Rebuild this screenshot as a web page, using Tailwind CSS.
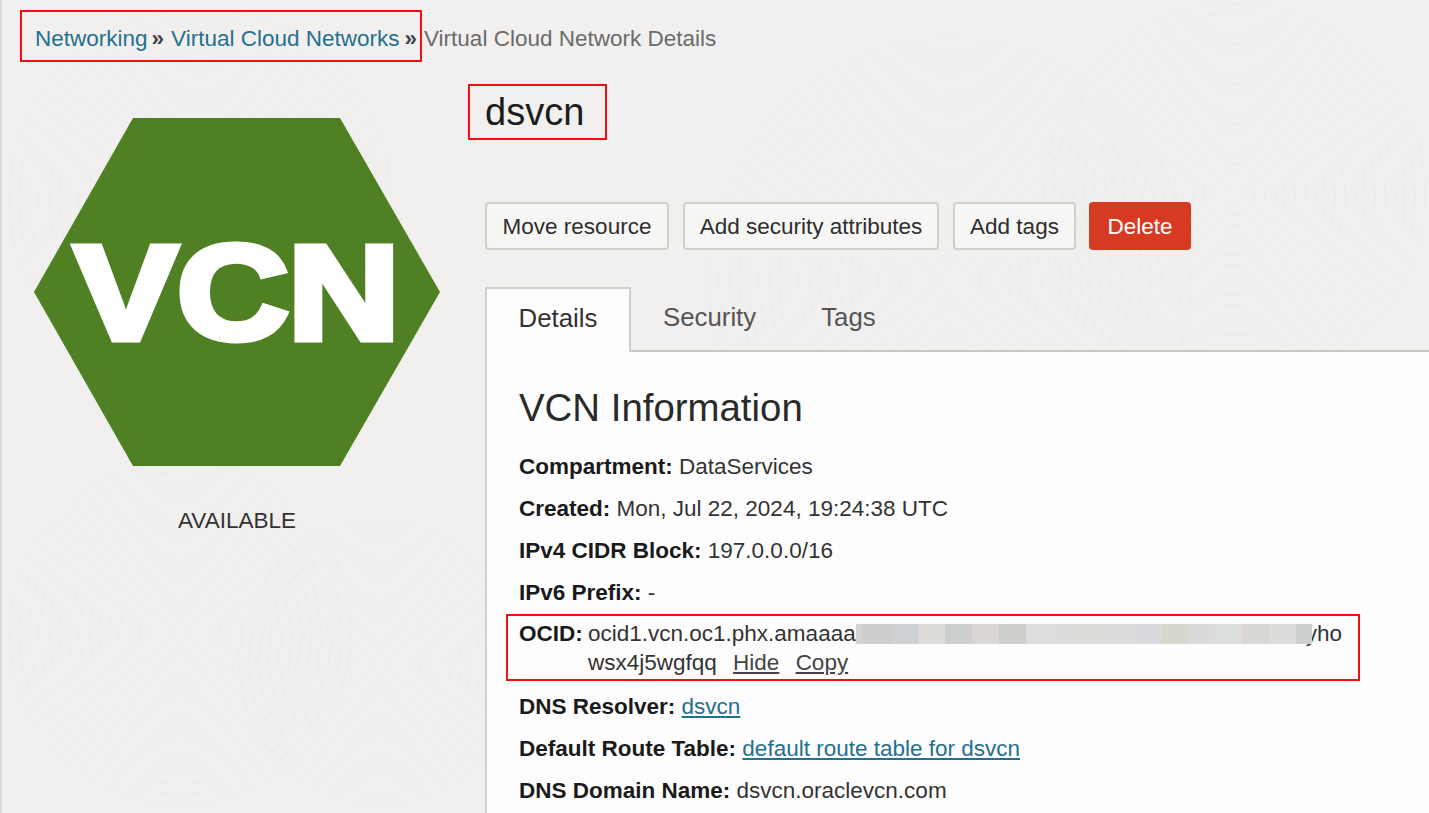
<!DOCTYPE html>
<html lang="en">
<head>
    <meta charset="UTF-8">
    <title>Virtual Cloud Network Details</title>
    <script src="https://cdn.jsdelivr.net/npm/@tailwindcss/browser@4"></script>
</head>
<body class="relative w-[1429px] h-[813px] overflow-hidden bg-[#f1f0ef] font-['Liberation_Sans',Arial,sans-serif] text-[#1f1f1f]">
    <!-- faint swirl texture -->
    <div class="absolute left-[700px] top-[30px] w-[500px] h-[500px] rounded-full bg-[repeating-radial-gradient(circle,#eeedeb_0,#eeedeb_1px,transparent_2px,transparent_10px)]"></div>
    <div class="absolute left-[1040px] top-0 w-[389px] h-[389px] rounded-full bg-[repeating-radial-gradient(circle,#eeedeb_0,#eeedeb_1px,transparent_2px,transparent_10px)]"></div>
    <div class="absolute left-0 top-0 w-[400px] h-[400px] rounded-full bg-[repeating-radial-gradient(circle,#eeedeb_0,#eeedeb_1px,transparent_2px,transparent_10px)]"></div>
    <div class="absolute left-0 top-[453px] w-[360px] h-[360px] rounded-full bg-[repeating-radial-gradient(circle,#eeedeb_0,#eeedeb_1px,transparent_2px,transparent_10px)]"></div>
    <div class="absolute left-[230px] top-[513px] w-[300px] h-[300px] rounded-full bg-[repeating-radial-gradient(circle,#eeedeb_0,#eeedeb_1px,transparent_2px,transparent_10px)]"></div>
    <div class="absolute left-0 top-0 w-[2px] h-full bg-[#dcdbd9]"></div>

    <div class="relative">
        <nav class="h-[76px] pl-[35px] pt-[25px] text-[22.5px] leading-[28px] flex whitespace-pre">
            <a class="text-[#23708f]">Networking</a><span class="font-bold text-[#444] ml-[4px] mr-[7px]">»</span><a class="text-[#23708f]">Virtual Cloud Networks</a><span class="font-bold text-[#444] ml-[5px] mr-[7px]">»</span><span class="text-[#6b6b6b]">Virtual Cloud Network Details</span>
        </nav>

        <div class="flex">
            <aside class="w-[485px] shrink-0 pt-[42px] pl-[34px]">
                <svg width="406" height="348" viewBox="0 0 406 348" class="block">
                    <polygon points="99,0 306,0 406,174 306,348 99,348 0,174" fill="#4f8023"/>
                    <text x="203" y="220.5" text-anchor="middle" textLength="325" lengthAdjust="spacingAndGlyphs" fill="#fff" stroke="#fff" stroke-width="7" font-size="133" font-weight="700" font-family="Liberation Sans, Arial, sans-serif">VCN</text>
                </svg>
                <p class="w-[406px] mt-[41px] text-center text-[22.5px] leading-[28px] text-[#333]">AVAILABLE</p>
            </aside>

            <main class="flex-1 min-w-0">
                <h1 class="pt-[13px] text-[38px] leading-[46px] text-[#1c1c1c]">dsvcn</h1>

                <div class="mt-[67px] flex gap-[14px] text-[22.5px] leading-none text-[#2e2e2e]">
                    <button class="h-[48px] w-[184px] pt-[2px] rounded-[4px] border-2 border-[#d0cfcc] bg-[#f6f6f5]">Move resource</button>
                    <button class="h-[48px] w-[256px] pt-[2px] rounded-[4px] border-2 border-[#d0cfcc] bg-[#f6f6f5]">Add security attributes</button>
                    <button class="h-[48px] w-[123px] pt-[2px] rounded-[4px] border-2 border-[#d0cfcc] bg-[#f6f6f5]">Add tags</button>
                    <button class="h-[48px] w-[102px] -ml-[1px] pt-[2px] rounded-[4px] bg-[#d73a22] text-white">Delete</button>
                </div>

                <div class="mt-[37px] flex h-[65px] items-stretch border-b-2 border-[#c9c8c5] text-[25.8px]">
                    <div class="relative -mb-[2px] w-[146px] h-[65px] border-2 border-b-0 border-[#d0cfcc] bg-[#fdfdfd] pt-[10px] text-center text-[#333]">Details</div>
                    <div class="pl-[32px] pt-[11px] text-[#555]">Security</div>
                    <div class="pl-[65px] pt-[11px] text-[#555]">Tags</div>
                </div>

                <section class="h-[461px] border-l-2 border-[#d0cfcc] bg-[#fdfdfd] pl-[32px] text-[22.5px] leading-[28px] text-[#333]">
                    <h2 class="pt-[34px] text-[38.4px] leading-[44px] text-[#2a2a2a]">VCN Information</h2>
                    <p class="mt-[23px]"><b class="text-[#1a1a1a]">Compartment:</b> DataServices</p>
                    <p class="mt-[14px]"><b class="text-[#1a1a1a]">Created:</b> Mon, Jul 22, 2024, 19:24:38 UTC</p>
                    <p class="mt-[14px]"><b class="text-[#1a1a1a]">IPv4 CIDR Block:</b> 197.0.0.0/16</p>
                    <p class="mt-[14px]"><b class="text-[#1a1a1a]">IPv6 Prefix:</b> -</p>
                    <div class="mt-[13px] flex">
                        <b class="w-[69px] shrink-0 text-[#1a1a1a]">OCID:</b>
                        <div>
                            <div class="flex items-center whitespace-pre">
                                <span>ocid1.vcn.oc1.phx.amaaaa</span>
                                <span class="relative z-10 -mr-[6px] flex h-[20px]">
                                    <i class="w-[7px] bg-[#d4d4d3]"></i>
                                    <i class="w-[29px] bg-[#cdcdcc]"></i>
                                    <i class="w-[26px] bg-[#ced2d4]"></i>
                                    <i class="w-[27px] bg-[#dcdbd7]"></i>
                                    <i class="w-[27px] bg-[#cccfcf]"></i>
                                    <i class="w-[27px] bg-[#d9d6d4]"></i>
                                    <i class="w-[27px] bg-[#cdcfcb]"></i>
                                    <i class="w-[27px] bg-[#dcdedd]"></i>
                                    <i class="w-[27px] bg-[#dddcda]"></i>
                                    <i class="w-[27px] bg-[#dadcd8]"></i>
                                    <i class="w-[26px] bg-[#dadcdb]"></i>
                                    <i class="w-[28px] bg-[#d9d9de]"></i>
                                    <i class="w-[27px] bg-[#d5d8cd]"></i>
                                    <i class="w-[27px] bg-[#d9dbd8]"></i>
                                    <i class="w-[27px] bg-[#dadfdc]"></i>
                                    <i class="w-[27px] bg-[#d8d7d4]"></i>
                                    <i class="w-[27px] bg-[#dcdcda]"></i>
                                    <i class="w-[16px] bg-[#ccd0d0]"></i>
                                </span>
                                <span>yho</span>
                            </div>
                            <div class="mt-[1px]">wsx4j5wgfqq <a class="ml-[10px] underline text-[#444]">Hide</a> <a class="ml-[10px] underline text-[#444]">Copy</a></div>
                        </div>
                    </div>
                    <p class="mt-[16px]"><b class="text-[#1a1a1a]">DNS Resolver:</b> <a class="underline text-[#23708f]">dsvcn</a></p>
                    <p class="mt-[14px]"><b class="text-[#1a1a1a]">Default Route Table:</b> <a class="underline text-[#23708f]">default route table for dsvcn</a></p>
                    <p class="mt-[14px]"><b class="text-[#1a1a1a]">DNS Domain Name:</b> dsvcn.oraclevcn.com</p>
                </section>
            </main>
        </div>
    </div>

    <!-- red annotation boxes -->
    <div class="absolute left-[20px] top-[10px] w-[402px] h-[52px] border-2 border-[#ee1111]"></div>
    <div class="absolute left-[468px] top-[84px] w-[139px] h-[56px] border-2 border-[#ee1111]"></div>
    <div class="absolute left-[506px] top-[614px] w-[854px] h-[67px] border-2 border-[#ee1111]"></div>
</body>
</html>
